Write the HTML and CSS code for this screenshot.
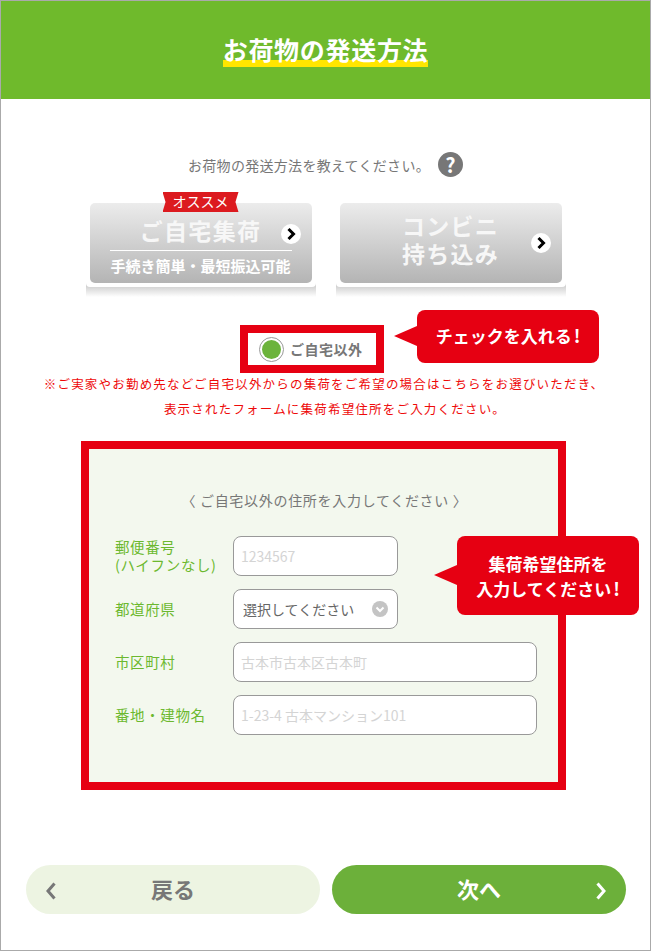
FILE: index.html
```html
<!DOCTYPE html>
<html lang="ja">
<head>
    <meta charset="UTF-8">
    <meta name="viewport" content="width=device-width, initial-scale=1.0">
    <title>お荷物の発送方法</title>
    <link rel="stylesheet" href="styles.css">
</head>
<body>
    <div class="page">
        <header class="header">
            <h1 class="title">お荷物の発送方法</h1>
        </header>

        <div class="prompt">
            <span>お荷物の発送方法を教えてください。</span>
            <span class="help">?</span>
        </div>

        <div class="choices">
            <div class="choice">
                <div class="choice-face">
                    <span class="ribbon">オススメ</span>
                    <div class="choice-main">ご自宅集荷</div>
                    <div class="choice-sub">手続き簡単・最短振込可能</div>
                    <svg class="chevron chevron-home" viewBox="0 0 20 20">
                        <ellipse cx="10" cy="10" rx="10" ry="10" fill="#fff"/>
                        <path d="M7.5 5 L12.5 10 L7.5 15" fill="none" stroke="#000" stroke-width="3"/>
                    </svg>
                </div>
                <div class="choice-base"></div>
            </div>
            <div class="choice">
                <div class="choice-face choice-face-center">
                    <div class="choice-main">コンビニ<br>持ち込み</div>
                    <svg class="chevron chevron-store" viewBox="0 0 20 20">
                        <ellipse cx="10" cy="10" rx="10" ry="10" fill="#fff"/>
                        <path d="M7.5 5 L12.5 10 L7.5 15" fill="none" stroke="#000" stroke-width="3"/>
                    </svg>
                </div>
                <div class="choice-base"></div>
            </div>
        </div>

        <label class="radio-box">
            <span class="radio"><span class="radio-dot"></span></span>
            <span>ご自宅以外</span>
        </label>
        <div class="callout callout-check">チェックを入れる<span class="bang">!</span></div>

        <p class="note">※ご実家やお勤め先などご自宅以外からの集荷をご希望の場合はこちらをお選びいただき、<br><span class="note-second">表示されたフォームに集荷希望住所をご入力ください。</span></p>

        <form class="form-box">
            <p class="form-title">〈 ご自宅以外の住所を入力してください 〉</p>
            <div class="rows">
                <div class="row">
                    <label class="row-label">郵便番号<br>(ハイフンなし)</label>
                    <input class="field field-short" type="text" placeholder="1234567">
                </div>
                <div class="row">
                    <label class="row-label">都道府県</label>
                    <div class="select-wrap">
                        <select class="field field-select">
                            <option>選択してください</option>
                        </select>
                        <svg class="select-arrow" viewBox="0 0 16 16">
                            <circle cx="8" cy="8" r="8" fill="#c4c4c4"/>
                            <path d="M4.5 6.5 L8 10 L11.5 6.5" fill="none" stroke="#fff" stroke-width="2"/>
                        </svg>
                    </div>
                </div>
                <div class="row">
                    <label class="row-label">市区町村</label>
                    <input class="field" type="text" placeholder="古本市古本区古本町">
                </div>
                <div class="row">
                    <label class="row-label">番地・建物名</label>
                    <input class="field" type="text" placeholder="1-23-4 古本マンション101">
                </div>
            </div>
        </form>
        <div class="callout callout-address">集荷希望住所を<br>入力してください<span class="bang">!</span></div>

        <div class="nav">
            <a class="nav-btn nav-back">
                <svg class="nav-arrow nav-arrow-left" viewBox="0 0 10 18">
                    <path d="M8.5 1.5 L2 9 L8.5 16.5" fill="none" stroke="#777" stroke-width="3"/>
                </svg>
                戻る
            </a>
            <a class="nav-btn nav-next">
                次へ
                <svg class="nav-arrow nav-arrow-right" viewBox="0 0 10 18">
                    <path d="M1.5 1.5 L8 9 L1.5 16.5" fill="none" stroke="#fff" stroke-width="3"/>
                </svg>
            </a>
        </div>
    </div>
</body>
</html>
```

FILE: styles.css
```css
* {
    margin: 0;
    padding: 0;
    box-sizing: border-box;
}

body {
    font-family: "Noto Sans CJK JP", "Noto Sans", sans-serif;
    background-color: #fff;
    color: #666;
}

.page {
    position: relative;
    width: 651px;
    height: 951px;
    border: 1px solid #aaa;
    overflow: hidden;
}

.header {
    height: 98px;
    background-color: #6fba2c;
    text-align: center;
    padding-top: 30px;
}

.title {
    display: inline-block;
    height: 36px;
    font-size: 25px;
    line-height: 36px;
    letter-spacing: 0.7px;
    font-weight: 700;
    color: #fff;
    background: linear-gradient(#ffe600, #ffe600) no-repeat left bottom / 100% 7px;
}

.prompt {
    display: flex;
    justify-content: center;
    align-items: center;
    gap: 8px;
    height: 25px;
    margin-top: 53px;
    font-size: 14px;
    letter-spacing: 0.3px;
    color: #777;
}

.help {
    width: 25px;
    height: 25px;
    border-radius: 50%;
    background-color: #777;
    color: #fff;
    font-size: 20px;
    font-weight: 700;
    line-height: 25px;
    text-align: center;
}

.choices {
    display: flex;
    justify-content: center;
    gap: 20px;
    margin-top: 26px;
}

.choice {
    width: 230px;
}

.choice-face {
    position: relative;
    height: 80px;
    margin: 0 4px;
    border-radius: 5px;
    background: linear-gradient(#ececec, #b4b4b4);
    color: #fff;
    text-align: center;
    padding-top: 13px;
}

.choice-face-center {
    padding-top: 8px;
}

.choice-main {
    font-size: 23px;
    font-weight: 700;
    line-height: 28px;
    letter-spacing: 1.3px;
    color: #f7f7f7;
}

.choice-sub {
    width: 182px;
    margin: 6px auto 0;
    border-top: 1px solid #fff;
    font-size: 15px;
    font-weight: 700;
    line-height: 29px;
    white-space: nowrap;
}

.ribbon {
    position: absolute;
    top: -11px;
    left: 73px;
    width: 76px;
    height: 20px;
    background-color: #dc1a1f;
    font-size: 14px;
    line-height: 18px;
    clip-path: polygon(0 0, 100% 0, 96% 50%, 100% 100%, 0 100%, 4% 50%);
}

.chevron {
    position: absolute;
    width: 20px;
    height: 20px;
    right: 11px;
}

.chevron-home {
    top: 21px;
}

.chevron-store {
    top: 30px;
}

.choice-base {
    position: relative;
    height: 14px;
    background: linear-gradient(#c4c4c4, #fff);
}

.choice-base::before {
    content: "";
    display: block;
    height: 4px;
    background-color: #fff;
    border-radius: 0 0 5px 5px;
}

.radio-box {
    display: flex;
    align-items: center;
    gap: 6px;
    width: 144px;
    height: 48px;
    margin: 28px 0 0 239px;
    padding-left: 11px;
    border: 8px solid #e60012;
    font-size: 14px;
    font-weight: 700;
    letter-spacing: 0.5px;
    color: #777;
}

.radio {
    display: flex;
    justify-content: center;
    align-items: center;
    width: 25px;
    height: 25px;
    border: 1px solid #999;
    border-radius: 50%;
    background-color: #fff;
}

.radio-dot {
    width: 19px;
    height: 19px;
    border-radius: 50%;
    background-color: #6cb33c;
}

.callout {
    position: absolute;
    background-color: #e60012;
    border-radius: 8px;
    color: #fff;
    font-weight: 700;
    text-align: center;
}

.callout::before {
    content: "";
    position: absolute;
    left: -23px;
    border-style: solid;
    border-color: transparent #e60012 transparent transparent;
    border-width: 10px 23px 10px 0;
}

.callout-check {
    top: 309px;
    left: 416px;
    width: 182px;
    height: 53px;
    font-size: 17px;
    line-height: 50px;
}

.callout-check::before {
    top: 16px;
}

.callout-address {
    top: 535px;
    left: 456px;
    width: 182px;
    height: 79px;
    padding-top: 16px;
    font-size: 17px;
    line-height: 24px;
}

.callout-address::before {
    top: 29px;
}

.bang {
    margin-left: 2px;
    font-size: 18px;
}

.note {
    margin-top: -2px;
    font-size: 12.5px;
    line-height: 25px;
    letter-spacing: 1.2px;
    color: #ee0a0a;
    text-align: center;
    padding-right: 3px;
}

.note-second {
    padding-left: 22px;
}

.form-box {
    width: 485px;
    height: 349px;
    margin: 20px 0 0 80px;
    padding: 37px 0 0 26px;
    border: 8px solid #e60012;
    background-color: #f3f8ee;
}

.form-title {
    padding-right: 24px;
    font-size: 14px;
    line-height: 28px;
    letter-spacing: 0.7px;
    color: #777;
    text-align: center;
}

.rows {
    display: flex;
    flex-direction: column;
    gap: 13px;
    margin-top: 22px;
}

.row {
    display: flex;
    align-items: center;
}

.row-label {
    width: 118px;
    font-size: 14.5px;
    line-height: 18px;
    letter-spacing: 0.6px;
    color: #6cb82f;
    white-space: nowrap;
}

.field {
    width: 304px;
    height: 40px;
    border: 1px solid #999;
    border-radius: 8px;
    background-color: #fff;
    padding: 0 7px;
    font-family: inherit;
    font-size: 14px;
    color: #666;
}

.field::placeholder {
    color: #d4d4d4;
}

.field-short {
    width: 165px;
}

.select-wrap {
    position: relative;
    width: 165px;
}

.field-select {
    display: block;
    width: 165px;
    appearance: none;
    padding-left: 9px;
}

.select-arrow {
    position: absolute;
    top: 12px;
    right: 10px;
    width: 16px;
    height: 16px;
}

.nav {
    display: flex;
    gap: 12px;
    margin-top: 75px;
    padding-left: 25px;
}

.nav-btn {
    position: relative;
    width: 294px;
    height: 49px;
    border-radius: 25px;
    font-size: 22px;
    font-weight: 700;
    line-height: 47px;
    text-align: center;
}

.nav-back {
    background-color: #edf4e2;
    color: #777;
}

.nav-next {
    background-color: #6cb03a;
    color: #fff;
}

.nav-arrow {
    position: absolute;
    top: 17px;
    width: 10px;
    height: 18px;
}

.nav-arrow-left {
    left: 20px;
}

.nav-arrow-right {
    right: 20px;
}
```
